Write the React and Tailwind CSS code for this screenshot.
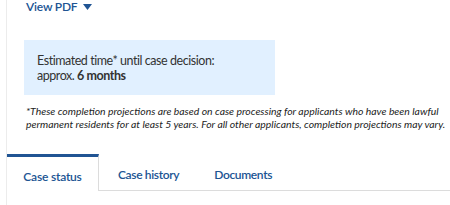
export default function App() {
  return (
    <div
      className="w-[450px] h-[205px] overflow-hidden bg-white pl-[6px]"
      style={{ fontFamily: "Lato, 'Open Sans', sans-serif" }}
    >
      <div className="h-full border-l border-[#ececec]">
        <div className="pl-[19px]">
          <button className="flex items-center gap-[5px] text-[12px] leading-[13px] font-semibold tracking-[-0.2px] text-[#205493]">
            View PDF
            <svg width="9" height="6" viewBox="0 0 9 6" className="ml-[1px]">
              <path d="M0 0h9L4.5 6z" fill="#205493" />
            </svg>
          </button>
        </div>

        <div className="pl-[17px] mt-[27px]">
          <div className="w-[251px] h-[55px] bg-[#e1f0ff] pl-[13px] pt-[13px] text-[12.5px] leading-[15px] tracking-[-0.45px] text-[#333]">
            <p>Estimated time* until case decision:</p>
            <p>
              approx. <span className="font-bold">6 months</span>
            </p>
          </div>
        </div>

        <p className="pl-[19px] pr-[2px] mt-[10px] text-[10.4px] leading-[13px] italic text-[#222]">
          *These completion projections are based on case processing for
          applicants who have been lawful permanent residents for at least 5
          years. For all other applicants, completion projections may vary.
        </p>

        <div className="mt-[23px] flex border-b border-[#dcdcdc] h-[37px]">
          <div className="w-[92px] border-t-[3px] border-[#205493] border-r border-r-[#dcdcdc] bg-white -mb-px pt-[5px] flex items-center justify-center text-[12px] font-semibold tracking-[-0.2px] text-[#205493]">
            Case status
          </div>
          <div className="pl-[19px] pr-[18px] pt-[5px] flex items-center text-[12px] font-semibold tracking-[-0.35px] text-[#205493]">
            Case history
          </div>
          <div className="px-[17px] pt-[5px] flex items-center text-[12px] font-semibold tracking-[-0.35px] text-[#205493]">
            Documents
          </div>
        </div>
      </div>
    </div>
  );
}
